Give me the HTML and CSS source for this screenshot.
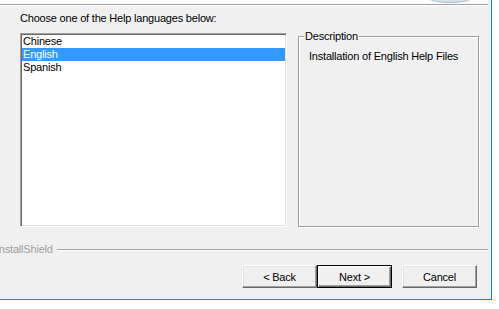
FILE: index.html
```html
<!DOCTYPE html>
<html lang="en">
<head>
<meta charset="UTF-8" />
<title>Choose Help Languages</title>
<link rel="stylesheet" href="styles.css">
</head>
<body>
  <div class="window">
    <div class="banner">
      <span class="banner-knob"></span>
    </div>

    <div class="body">
      <p class="prompt">Choose one of the Help languages below:</p>

      <div class="panes">
        <ul class="listbox" role="listbox" aria-label="Help languages">
          <li class="item">Chinese</li>
          <li class="item selected" aria-selected="true">English</li>
          <li class="item">Spanish</li>
        </ul>

        <fieldset class="groupbox">
          <legend>Description</legend>
          <p class="desc">Installation of English Help Files</p>
        </fieldset>
      </div>
    </div>

    <div class="brand">
      <span class="brand-name">InstallShield</span>
      <span class="brand-line"></span>
    </div>

    <div class="buttons">
      <button type="button" class="btn">&lt; Back</button>
      <button type="button" class="btn default">Next &gt;</button>
      <button type="button" class="btn cancel">Cancel</button>
    </div>
  </div>
</body>
</html>
```

FILE: styles.css
```css
/* base */
*, *::before, *::after {
  box-sizing: border-box;
}
html, body {
  margin: 0;
  padding: 0;
  background: #fff;
  font-family: "Liberation Sans", Arial, sans-serif;
  font-size: 11px;
  letter-spacing: -0.2px;
  color: #000;
}
.window {
  width: 492px;
  height: 300px;
  background: #f0f0f0;
  border-right: 1px solid #1883d7;
  border-bottom: 1px solid #1883d7;
  display: flex;
  flex-direction: column;
  overflow: hidden;
}
/* top banner edge */
.banner {
  position: relative;
  height: 5px;
  background: #fff;
  border-bottom: 1px solid #a0a0a0;
  margin-right: 3px;
}
.banner-knob {
  position: absolute;
  left: 430px;
  top: -5px;
  width: 40px;
  height: 8px;
  border-radius: 50%;
  background: #d5e1ea;
  border: 1px solid #a9bccb;
}
.body {
  padding: 6px 0 0 20px;
  border-top: 1px solid #fff;
  margin-right: 3px;
}
.prompt {
  margin: 0 0 8px;
  line-height: 13px;
}
.panes {
  display: flex;
  gap: 11px;
  height: 194px;
}
/* list box */
.listbox {
  flex: none;
  margin: 0;
  padding: 1px 1px 0;
  list-style: none;
  width: 267px;
  background: #fff;
  border-style: solid;
  border-width: 1px;
  border-color: #a0a0a0 #fff #fff #a0a0a0;
  box-shadow: inset 1px 1px 0 #696969, inset -1px -1px 0 #e3e3e3;
}
.item {
  height: 13px;
  line-height: 13px;
  padding-left: 1px;
}
.item.selected {
  background: #3399ff;
  color: #fff;
}
/* group box */
.groupbox {
  flex: none;
  width: 181px;
  margin: -3px 0 0;
  padding: 0 0 0 10px;
  border: 1px solid #a0a0a0;
  box-shadow: 1px 1px 0 #fff, inset 1px 1px 0 #fff;
  min-width: 0;
}
.groupbox legend {
  padding: 0 1px;
  margin-left: -5px;
  line-height: 13px;
}
.desc {
  margin: 7px 0 0;
  line-height: 13px;
}
/* InstallShield line */
.brand {
  display: flex;
  align-items: center;
  gap: 4px;
  margin-top: 16px;
  margin-right: 3px;
}
.brand-name {
  margin-left: -4px;
  color: #a0a0a0;
  line-height: 13px;
}
.brand-line {
  flex: 1;
  height: 2px;
  border-top: 1px solid #a0a0a0;
  border-bottom: 1px solid #fff;
}
/* buttons */
.buttons {
  display: flex;
  padding-left: 242px;
  margin-top: 9px;
}
.btn {
  width: 75px;
  height: 23px;
  padding: 0;
  font: inherit;
  letter-spacing: inherit;
  color: #000;
  background: #f0f0f0;
  border-style: solid;
  border-width: 1px;
  border-color: #fff #696969 #696969 #fff;
  box-shadow: inset -1px -1px 0 #a0a0a0, inset 1px 1px 0 #e3e3e3;
}
.btn.default {
  border: 1px solid #000;
  box-shadow: inset 1px 1px 0 #fff, inset -1px -1px 0 #696969, inset -2px -2px 0 #a0a0a0;
}
.btn.cancel {
  margin-left: 10px;
}
```
